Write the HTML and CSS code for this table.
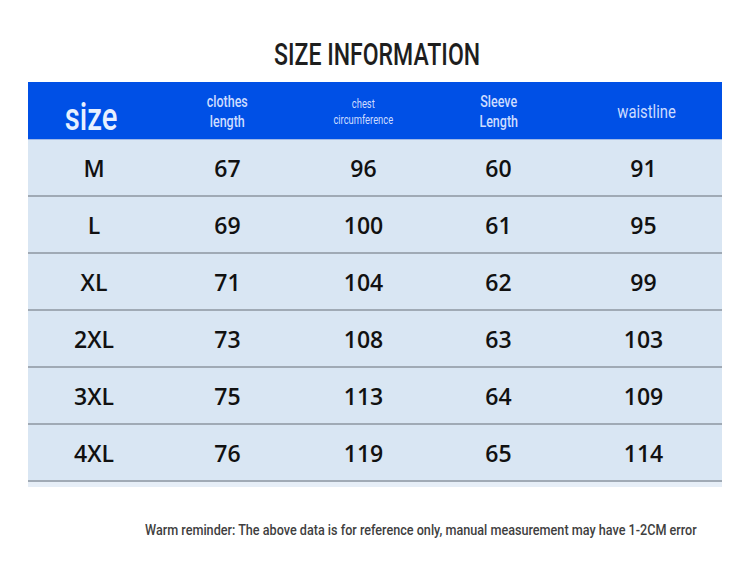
FILE: index.html
```html
<!DOCTYPE html>
<html>
<head>
<meta charset="utf-8">
<link rel="stylesheet" href="styles.css">
</head>
<body>
<div class="page">
  <h1 class="title"><span class="cond">SIZE INFORMATION</span></h1>
  <div class="table">
    <div class="row head">
      <div class="cell"><span class="cond size-label">size</span></div>
      <div class="cell"><span class="cond h2">clothes<br>length</span></div>
      <div class="cell"><span class="cond h3">chest<br>circumference</span></div>
      <div class="cell"><span class="cond h2">Sleeve<br>Length</span></div>
      <div class="cell"><span class="cond h4">waistline</span></div>
    </div>
    <div class="row"><div class="cell">M</div><div class="cell">67</div><div class="cell">96</div><div class="cell">60</div><div class="cell">91</div></div>
    <div class="row"><div class="cell">L</div><div class="cell">69</div><div class="cell">100</div><div class="cell">61</div><div class="cell">95</div></div>
    <div class="row"><div class="cell">XL</div><div class="cell">71</div><div class="cell">104</div><div class="cell">62</div><div class="cell">99</div></div>
    <div class="row"><div class="cell">2XL</div><div class="cell">73</div><div class="cell">108</div><div class="cell">63</div><div class="cell">103</div></div>
    <div class="row"><div class="cell">3XL</div><div class="cell">75</div><div class="cell">113</div><div class="cell">64</div><div class="cell">109</div></div>
    <div class="row"><div class="cell">4XL</div><div class="cell">76</div><div class="cell">119</div><div class="cell">65</div><div class="cell">114</div></div>
    <div class="tail"></div>
  </div>
  <p class="note"><span class="cond">Warm reminder: The above data is for reference only, manual measurement may have 1-2CM error</span></p>
</div>
</body>
</html>
```
FILE: styles.css
```css
html, body {
  margin: 0;
  padding: 0;
  background: #ffffff;
}
.page {
  width: 750px;
  height: 563px;
  overflow: hidden;
  font-family: "Open Sans", "Noto Sans", sans-serif;
}
.cond {
  display: inline-block;
  font-family: Roboto, "DejaVu Sans", sans-serif;
  transform: scaleX(0.78);
  transform-origin: center;
  white-space: nowrap;
}
.title {
  margin: 0;
  height: 82px;
  box-sizing: border-box;
  padding-top: 34px;
  text-align: center;
  font-size: 32px;
  line-height: 38px;
  font-weight: 500;
  color: #1e1e1e;
}
.title .cond {
  font-family: Roboto, sans-serif;
  font-weight: 500;
  transform: scaleX(0.72);
  margin-left: 5px;
}
.table {
  margin: 0 28px;
  width: 694px;
  background: #d9e6f3;
}
.row {
  display: grid;
  grid-template-columns: 132px 135px 137px 133px 157px;
  height: 55px;
  border-bottom: 2px solid #a0aab5;
}
.row.head {
  height: 57px;
  border-bottom: 1px solid #9fb8e8;
  background: #0050e6;
  color: #d4e2ff;
}
.cell {
  display: flex;
  align-items: center;
  justify-content: center;
  text-align: center;
  font-size: 23px;
  font-weight: 600;
  color: #111111;
}
.head .cell {
  color: #cddcff;
  font-weight: 400;
  padding-top: 3px;
}
.size-label {
  font-size: 39px;
  font-weight: 500;
  line-height: 40px;
  margin-top: 9px;
  margin-right: 5px;
  color: #e8f0ff;
  transform: scaleX(0.75);
}
.h2 {
  font-size: 16px;
  line-height: 20px;
  font-weight: 500;
}
.h3 {
  font-size: 12px;
  line-height: 16px;
  font-weight: 400;
}
.h4 {
  font-size: 19px;
  line-height: 22px;
  font-weight: 400;
  margin-left: 6px;
}
.tail {
  height: 5px;
  background: #e6eef7;
}
.note {
  margin: 34px 0 0 0;
  padding-left: 145px;
  text-align: left;
  font-size: 15.4px;
  line-height: 18px;
  color: #3f3f3f;
}
.note .cond {
  font-weight: 500;
  transform: scaleX(0.82);
  transform-origin: left center;
}
```
